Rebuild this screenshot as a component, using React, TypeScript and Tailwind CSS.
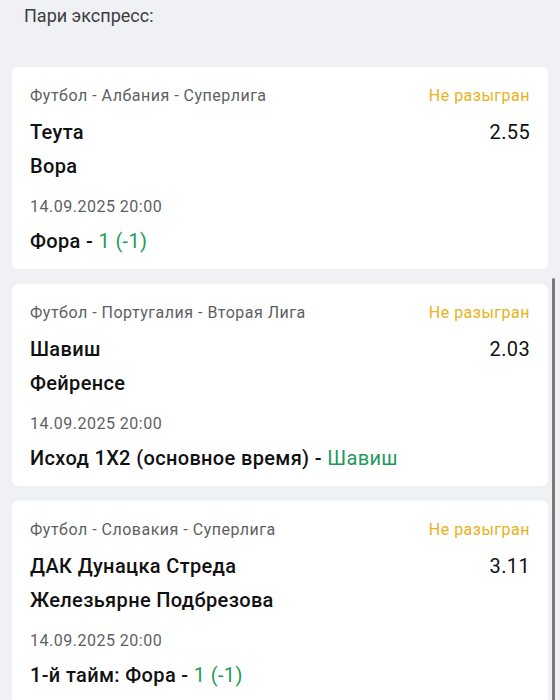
import React from "react";

type Bet = {
  league: string;
  home: string;
  away: string;
  odds: string;
  date: string;
  market: string;
  pick: string;
};

const bets: Bet[] = [
  {
    league: "Футбол - Албания - Суперлига",
    home: "Теута",
    away: "Вора",
    odds: "2.55",
    date: "14.09.2025 20:00",
    market: "Фора - ",
    pick: "1 (-1)",
  },
  {
    league: "Футбол - Португалия - Вторая Лига",
    home: "Шавиш",
    away: "Фейренсе",
    odds: "2.03",
    date: "14.09.2025 20:00",
    market: "Исход 1X2 (основное время) - ",
    pick: "Шавиш",
  },
  {
    league: "Футбол - Словакия - Суперлига",
    home: "ДАК Дунацка Стреда",
    away: "Железьярне Подбрезова",
    odds: "3.11",
    date: "14.09.2025 20:00",
    market: "1-й тайм: Фора - ",
    pick: "1 (-1)",
  },
];

function BetCard({ bet }: { bet: Bet }) {
  return (
    <div className="rounded-md bg-white px-[18px] pt-[19px] pb-[17px]">
      <div className="flex items-center justify-between text-[16px] leading-[20px] tracking-[0.5px]">
        <span className="text-[#5d5f63]">{bet.league}</span>
        <span className="text-[#e8b21a]">Не разыгран</span>
      </div>
      <div className="mt-[15px] flex items-center justify-between text-[20px] leading-[22px] tracking-[0.35px] text-[#111]">
        <span className="font-medium">{bet.home}</span>
        <span>{bet.odds}</span>
      </div>
      <div className="mt-[12px] text-[20px] leading-[22px] font-medium tracking-[0.35px] text-[#111]">{bet.away}</div>
      <div className="mt-[20px] text-[16px] leading-[20px] tracking-[0.5px] text-[#5d5f63]">{bet.date}</div>
      <div className="mt-[13px] text-[20px] leading-[22px] font-medium tracking-[0.35px] text-[#111]">
        {bet.market}
        <span className="font-normal text-[#1f9a57]">{bet.pick}</span>
      </div>
    </div>
  );
}

export default function App() {
  return (
    <div
      className="relative h-[700px] w-[560px] overflow-hidden bg-[#f0f1f4]"
      style={{ fontFamily: "Roboto, 'Noto Sans', sans-serif" }}
    >
      <div className="px-[24px] pt-[4px] text-[18px] leading-[24px] text-[#3a3c40]">Пари экспресс:</div>
      <div className="mt-[39px] flex flex-col gap-[15px] px-[12px]">
        {bets.map((bet) => (
          <BetCard key={bet.home} bet={bet} />
        ))}
      </div>
      <div className="absolute top-[278px] right-[5px] h-[430px] w-[3px] rounded-full bg-[#7a7a7a]" />
    </div>
  );
}
